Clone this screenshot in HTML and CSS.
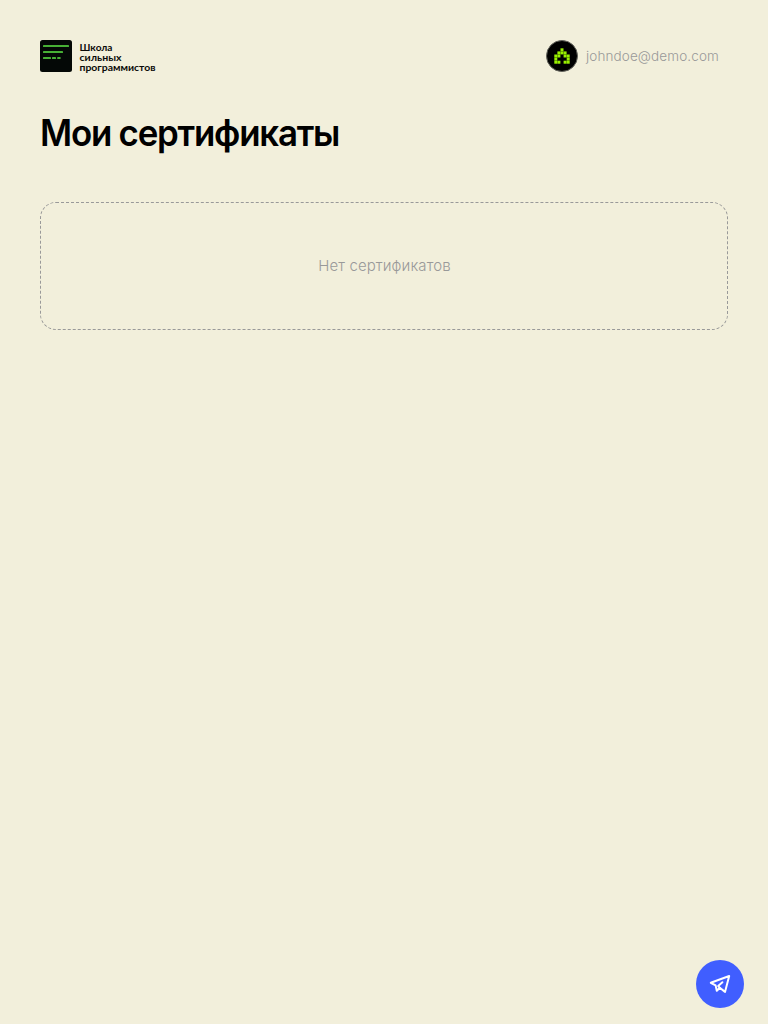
FILE: index.html
```html
<!DOCTYPE html>
<html lang="ru">
<head>
<meta charset="utf-8">
<title>Мои сертификаты</title>
<link rel="stylesheet" href="styles.css">
</head>
<body>
<div class="page">
  <header class="header">
    <a class="logo">
      <svg width="116" height="34" viewBox="0 0 116 34">
        <rect width="32" height="32" rx="2.5" fill="#040806"/>
        <g fill="#47b035">
          <rect x="3" y="5" width="26" height="2" rx=".6"/>
          <rect x="3" y="11" width="20" height="2" rx=".6"/>
          <rect x="3" y="17" width="8" height="2" rx=".6"/>
          <rect x="12" y="17" width="4" height="2" rx=".6"/>
          <rect x="17.2" y="17" width="3.4" height="2" rx=".6"/>
        </g>
        <g class="logo-text" lang="bg">
          <text x="39.5" y="11" textLength="33" lengthAdjust="spacingAndGlyphs">Школа</text>
          <text x="39.5" y="20.5" textLength="42" lengthAdjust="spacingAndGlyphs">сильных</text>
          <text x="39.5" y="30.5" textLength="76" lengthAdjust="spacingAndGlyphs">программистов</text>
        </g>
      </svg>
    </a>
    <div class="user">
      <svg width="32" height="32" viewBox="0 0 32 32">
        <circle cx="16" cy="16" r="15.5" fill="#000" stroke="#62625b"/>
        <g fill="#99f000">
          <rect x="14.5" y="8.3" width="3" height="3"/>
          <rect x="11.4" y="11.4" width="3" height="3"/>
          <rect x="14.5" y="11.4" width="3" height="3"/>
          <rect x="17.6" y="11.4" width="3" height="3"/>
          <rect x="8.3" y="14.5" width="3" height="3"/>
          <rect x="11.4" y="14.5" width="3" height="3"/>
          <rect x="17.6" y="14.5" width="3" height="3"/>
          <rect x="20.7" y="14.5" width="3" height="3"/>
          <rect x="8.3" y="17.6" width="3" height="3"/>
          <rect x="20.7" y="17.6" width="3" height="3"/>
          <rect x="8.3" y="20.7" width="3" height="3"/>
          <rect x="11.4" y="20.7" width="3" height="3"/>
          <rect x="17.6" y="20.7" width="3" height="3"/>
          <rect x="20.7" y="20.7" width="3" height="3"/>
        </g>
      </svg>
      <span class="email">johndoe@demo.com</span>
    </div>
  </header>
  <h1 class="title">Мои сертификаты</h1>
  <div class="empty"><span class="empty-text">Нет сертификатов</span></div>
</div>
<button class="chat" aria-label="Чат">
  <svg width="24" height="24" viewBox="0 0 24 24" fill="none" stroke="#fff" stroke-width="2" stroke-linejoin="round" stroke-linecap="round">
    <path d="M2.8 10.8 21.2 4 17 19.9 11.8 15.8 8.8 18.8 7.6 13.4Z"/>
    <path d="M11.8 15.8 10.2 14 14.4 10.2"/>
  </svg>
</button>
</body>
</html>
```
FILE: styles.css
```css
* { box-sizing: border-box; }
body {
  margin: 0;
  min-height: 100vh;
  background: #f2efdb;
  color: #000;
  font-family: Inter, "Liberation Sans", sans-serif;
}
.page { padding: 40px; }
.header {
  display: flex;
  justify-content: space-between;
  height: 32px;
}
.logo { display: block; height: 34px; }
.logo svg { display: block; }
.logo-text {
  font-family: Lato, sans-serif;
  font-size: 8.5px;
  font-weight: 700;
  fill: #0a0a08;
}
.user {
  display: flex;
  align-items: center;
  gap: 8px;
  padding-right: 8px;
}
.email {
  width: 134px;
  white-space: nowrap;
  font-size: 13.5px;
  font-weight: 350;
  line-height: 20px;
  letter-spacing: .12px;
  color: #999;
}
.title {
  margin: 38px 0 0;
  font-size: 37px;
  font-weight: 600;
  line-height: 46px;
  letter-spacing: -1.3px;
  white-space: nowrap;
  transform: scaleX(.942);
  transform-origin: 0 0;
}
.empty {
  display: flex;
  align-items: center;
  justify-content: center;
  height: 128px;
  margin-top: 46px;
  border: 1px dashed #999;
  border-radius: 16px;
}
.empty-text {
  padding-left: 1px;
  font-size: 15px;
  font-weight: 350;
  line-height: 24px;
  letter-spacing: .1px;
  color: #999;
}
.chat {
  position: fixed;
  right: 24px;
  bottom: 16px;
  display: flex;
  align-items: center;
  justify-content: center;
  width: 48px;
  height: 48px;
  padding: 0;
  border: 0;
  border-radius: 50%;
  background: #405eff;
}
```
